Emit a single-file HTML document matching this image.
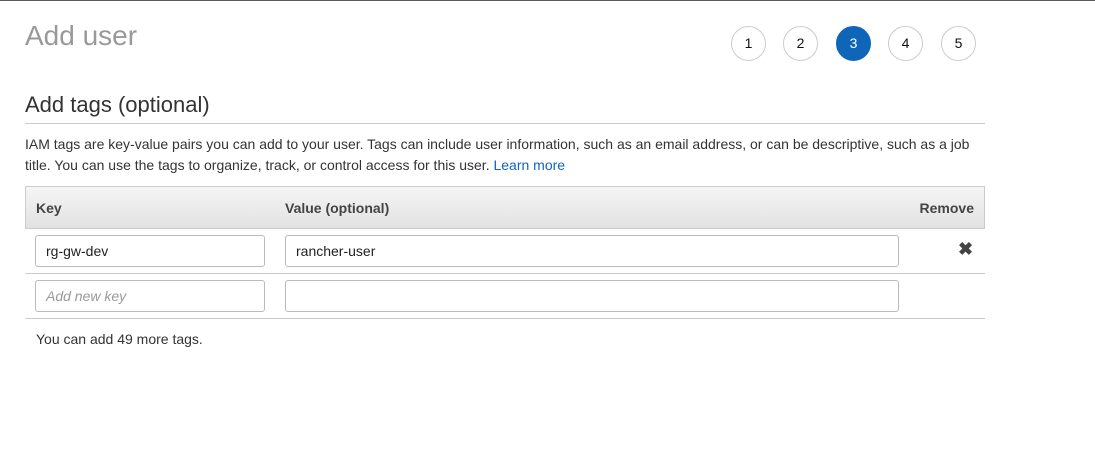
<!DOCTYPE html>
<html><head><style>
body{margin:0;width:1095px;height:472px;background:#fff;font-family:"Liberation Sans",sans-serif;position:relative;overflow:hidden;border-top:1px solid #545b64;box-sizing:border-box}
.a{position:absolute}
.step{position:absolute;top:25px;width:33px;height:33px;border:1px solid #ccc;border-radius:50%;text-align:center;line-height:33px;font-size:14px;color:#111}
.inp{position:absolute;height:32px;border:1px solid #bbb;border-radius:3px;box-sizing:border-box;font-size:14px;line-height:30px;padding-left:10px;color:#222}
.hr{position:absolute;left:25px;width:960px;height:1px;background:#ccc}
</style></head><body>
<div class="a" style="left:25px;top:19px;font-size:28px;color:#999">Add user</div>
<div class="step" style="left:731px">1</div>
<div class="step" style="left:783px">2</div>
<div class="step" style="left:836px;background:#0f66b8;border-color:#0f66b8;color:#fff">3</div>
<div class="step" style="left:888px">4</div>
<div class="step" style="left:941px">5</div>
<div class="a" style="left:25px;top:91px;font-size:22px;color:#333">Add tags (optional)</div>
<div class="hr" style="top:122px"></div>
<div class="a" style="left:25px;top:133px;width:960px;font-size:14px;line-height:21px;color:#333">IAM tags are key-value pairs you can add to your user. Tags can include user information, such as an email address, or can be descriptive, such as a job title. You can use the tags to organize, track, or control access for this user. <span style="color:#0f66b8">Learn more</span></div>
<div class="a" style="left:25px;top:185px;width:958px;height:41px;border:1px solid #ccc;background:linear-gradient(#f5f5f5,#e2e2e2);font-size:14px;font-weight:bold;color:#444">
<span class="a" style="left:10px;top:13px">Key</span><span class="a" style="left:259px;top:13px">Value (optional)</span><span class="a" style="right:10px;top:13px">Remove</span></div>
<div class="inp" style="left:35px;top:234px;width:230px">rg-gw-dev</div>
<div class="inp" style="left:285px;top:234px;width:614px">rancher-user</div>
<div class="a" style="left:958px;top:238px;font-size:18px;color:#444;font-weight:bold">✖</div>
<div class="hr" style="top:272px"></div>
<div class="inp" style="left:35px;top:279px;width:230px;color:#999;font-style:italic">Add new key</div>
<div class="inp" style="left:285px;top:279px;width:614px"></div>
<div class="hr" style="top:317px"></div>
<div class="a" style="left:36px;top:330px;font-size:14px;color:#333">You can add 49 more tags.</div>
</body></html>
